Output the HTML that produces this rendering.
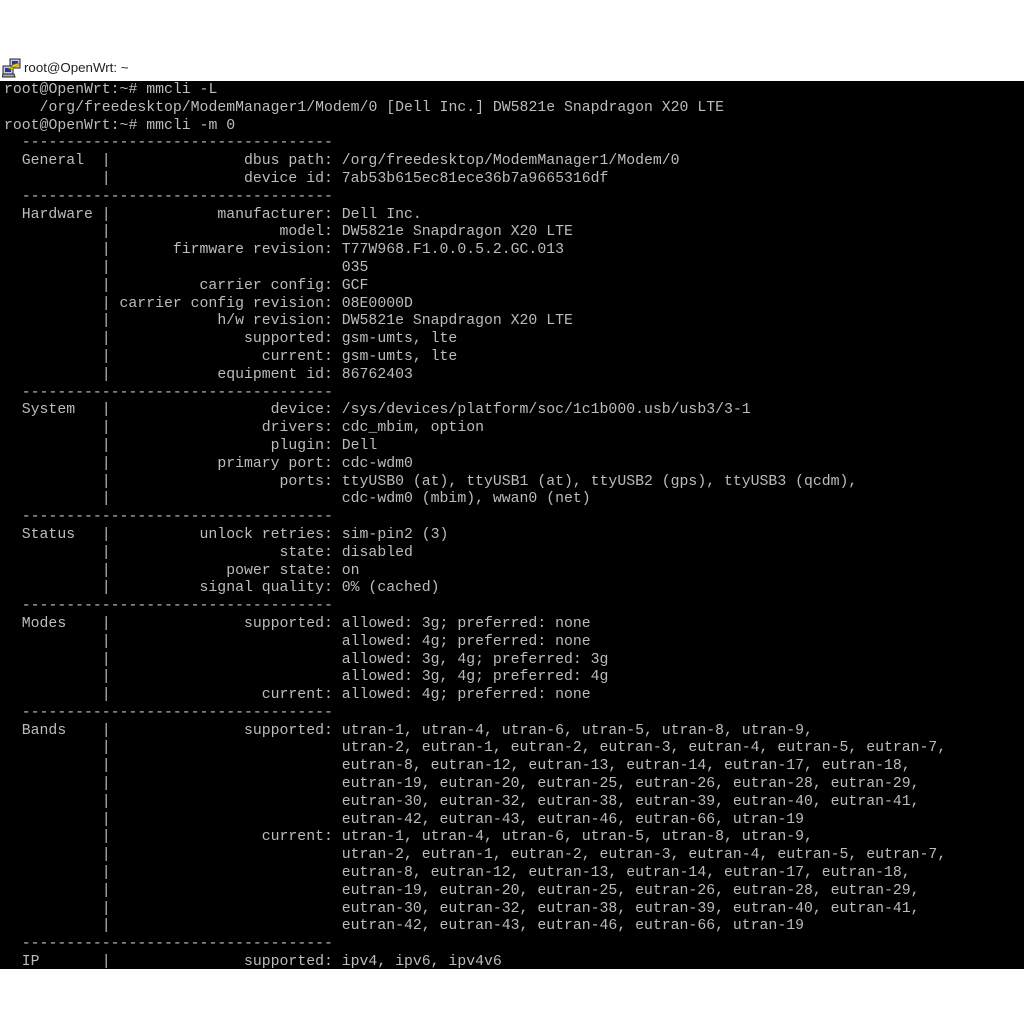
<!DOCTYPE html>
<html>
<head>
<meta charset="utf-8">
<title>root@OpenWrt: ~</title>
<style>
html,body{margin:0;padding:0;background:#fff;width:1024px;height:1024px;overflow:hidden}
#title{position:absolute;left:24px;top:59px;font:13.3px/17px "Liberation Sans",sans-serif;color:#222}
#icon{position:absolute;left:2px;top:58px}
#term{position:absolute;left:0;top:81px;width:1024px;height:888px;background:#000;overflow:hidden}
#txt{position:absolute;left:4px;top:1px;font:14.82px/17.8px "Liberation Mono",monospace;color:#bcbcbc}
#txt div{height:17.8px;white-space:pre}
i{font-style:normal;display:inline-block;box-sizing:border-box;width:11ch;padding-left:2ch}
b{font-weight:normal;display:inline-block;width:25ch;text-align:right}
</style>
</head>
<body>
<svg id="icon" width="20" height="20" viewBox="0 0 20 20">
<rect x="8" y="1" width="10" height="9" fill="#c8c8d8" stroke="#223" stroke-width="1"/>
<rect x="10" y="3" width="6" height="5" fill="#2a3a8c"/>
<rect x="1" y="8" width="10" height="8" fill="#c8c8d8" stroke="#223" stroke-width="1"/>
<rect x="3" y="10" width="6" height="4" fill="#2a3a8c"/>
<path d="M1 16h11l1 3H0z" fill="#aaa" stroke="#223" stroke-width="1"/>
<path d="M17 5 L10 7 L11 9 L6 11 L12 11 L11 9.500 L17 7z" fill="#f5d000" stroke="#8a7a00" stroke-width=".5"/>
</svg>
<div id="title">root@OpenWrt: ~</div>
<div id="term"><div id="txt"><div>root@OpenWrt:~# mmcli -L</div>
<div>    /org/freedesktop/ModemManager1/Modem/0 [Dell Inc.] DW5821e Snapdragon X20 LTE</div>
<div>root@OpenWrt:~# mmcli -m 0</div>
<div>  -----------------------------------</div>
<div><i>General</i>|<b>dbus path:</b> /org/freedesktop/ModemManager1/Modem/0</div>
<div><i></i>|<b>device id:</b> 7ab53b615ec81ece36b7a9665316df</div>
<div>  -----------------------------------</div>
<div><i>Hardware</i>|<b>manufacturer:</b> Dell Inc.</div>
<div><i></i>|<b>model:</b> DW5821e Snapdragon X20 LTE</div>
<div><i></i>|<b>firmware revision:</b> T77W968.F1.0.0.5.2.GC.013</div>
<div><i></i>|<b></b> 035</div>
<div><i></i>|<b>carrier config:</b> GCF</div>
<div><i></i>|<b>carrier config revision:</b> 08E0000D</div>
<div><i></i>|<b>h/w revision:</b> DW5821e Snapdragon X20 LTE</div>
<div><i></i>|<b>supported:</b> gsm-umts, lte</div>
<div><i></i>|<b>current:</b> gsm-umts, lte</div>
<div><i></i>|<b>equipment id:</b> 86762403</div>
<div>  -----------------------------------</div>
<div><i>System</i>|<b>device:</b> /sys/devices/platform/soc/1c1b000.usb/usb3/3-1</div>
<div><i></i>|<b>drivers:</b> cdc_mbim, option</div>
<div><i></i>|<b>plugin:</b> Dell</div>
<div><i></i>|<b>primary port:</b> cdc-wdm0</div>
<div><i></i>|<b>ports:</b> ttyUSB0 (at), ttyUSB1 (at), ttyUSB2 (gps), ttyUSB3 (qcdm),</div>
<div><i></i>|<b></b> cdc-wdm0 (mbim), wwan0 (net)</div>
<div>  -----------------------------------</div>
<div><i>Status</i>|<b>unlock retries:</b> sim-pin2 (3)</div>
<div><i></i>|<b>state:</b> disabled</div>
<div><i></i>|<b>power state:</b> on</div>
<div><i></i>|<b>signal quality:</b> 0% (cached)</div>
<div>  -----------------------------------</div>
<div><i>Modes</i>|<b>supported:</b> allowed: 3g; preferred: none</div>
<div><i></i>|<b></b> allowed: 4g; preferred: none</div>
<div><i></i>|<b></b> allowed: 3g, 4g; preferred: 3g</div>
<div><i></i>|<b></b> allowed: 3g, 4g; preferred: 4g</div>
<div><i></i>|<b>current:</b> allowed: 4g; preferred: none</div>
<div>  -----------------------------------</div>
<div><i>Bands</i>|<b>supported:</b> utran-1, utran-4, utran-6, utran-5, utran-8, utran-9,</div>
<div><i></i>|<b></b> utran-2, eutran-1, eutran-2, eutran-3, eutran-4, eutran-5, eutran-7,</div>
<div><i></i>|<b></b> eutran-8, eutran-12, eutran-13, eutran-14, eutran-17, eutran-18,</div>
<div><i></i>|<b></b> eutran-19, eutran-20, eutran-25, eutran-26, eutran-28, eutran-29,</div>
<div><i></i>|<b></b> eutran-30, eutran-32, eutran-38, eutran-39, eutran-40, eutran-41,</div>
<div><i></i>|<b></b> eutran-42, eutran-43, eutran-46, eutran-66, utran-19</div>
<div><i></i>|<b>current:</b> utran-1, utran-4, utran-6, utran-5, utran-8, utran-9,</div>
<div><i></i>|<b></b> utran-2, eutran-1, eutran-2, eutran-3, eutran-4, eutran-5, eutran-7,</div>
<div><i></i>|<b></b> eutran-8, eutran-12, eutran-13, eutran-14, eutran-17, eutran-18,</div>
<div><i></i>|<b></b> eutran-19, eutran-20, eutran-25, eutran-26, eutran-28, eutran-29,</div>
<div><i></i>|<b></b> eutran-30, eutran-32, eutran-38, eutran-39, eutran-40, eutran-41,</div>
<div><i></i>|<b></b> eutran-42, eutran-43, eutran-46, eutran-66, utran-19</div>
<div>  -----------------------------------</div>
<div><i>IP</i>|<b>supported:</b> ipv4, ipv6, ipv4v6</div></div></div>
</body>
</html>
